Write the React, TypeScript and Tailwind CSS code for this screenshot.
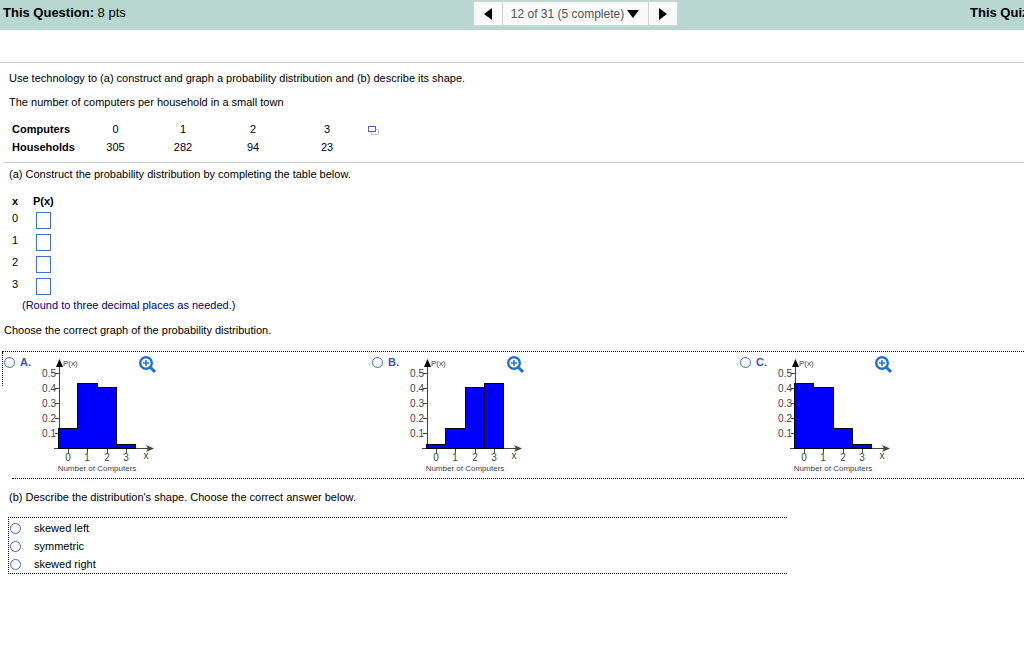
const distribution = [
  { computers: 0, households: 305, width: "w-[67px]" },
  { computers: 1, households: 282, width: "w-[68px]" },
  { computers: 2, households: 94, width: "w-[72px]" },
  { computers: 3, households: 23, width: "w-[76px]" },
];

// y of the top of each bar, left to right
const graphs = [
  { label: "A", tops: [72, 27, 31, 88] },
  { label: "B", tops: [88, 72, 31, 27] },
  { label: "C", tops: [27, 31, 72, 88] },
];

const shapes = ["skewed left", "symmetric", "skewed right"];

const radioClass =
  "appearance-none block shrink-0 w-[11px] h-[11px] rounded-full border border-[#4a63d8] bg-white checked:bg-[#4a63d8]";

function Histogram({ tops }: { tops: number[] }) {
  const edges = [18, 37, 57, 76, 95];

  return (
    <svg width="116" height="120" viewBox="0 0 116 120" className="block" fill="#444">
      <path d="M19.5 6V92.5M14 92.5H108" stroke="#444" fill="none" />
      <path d="M19.5 3L23 11H16Z" fill="#000" />
      <path d="M114 92.5L106 89L108 92.5L106 96Z" />
      {[17, 32, 47, 62, 77].map((y, i) => (
        <g key={y}>
          <path d={`M15 ${y + 0.5}H19`} stroke="#444" />
          <text x="16" y={y + 4} fontSize="10" textAnchor="end">
            {(0.5 - i * 0.1).toFixed(1)}
          </text>
        </g>
      ))}
      {tops.map((top, i) => (
        <g key={i}>
          <rect
            x={edges[i] + 0.5}
            y={top + 0.5}
            width={edges[i + 1] - edges[i]}
            height={92 - top}
            fill="#0000ff"
            stroke="#000"
          />
          <path d={`M${edges[i] + 10.5} 93V97`} stroke="#444" />
          <text x={edges[i] + 10} y="105" fontSize="10" textAnchor="middle">
            {i}
          </text>
        </g>
      ))}
      <text x="23" y="10" fontSize="8">
        P(x)
      </text>
      <text x="106" y="103" fontSize="10" textAnchor="middle">
        x
      </text>
      <text x="57" y="115" fontSize="8" textAnchor="middle">
        Number of Computers
      </text>
    </svg>
  );
}

function ZoomIcon() {
  return (
    <svg width="18" height="18" viewBox="0 0 18 18" fill="none" stroke="#1a73d9">
      <circle cx="7" cy="7" r="5.8" strokeWidth="2.4" />
      <path d="M7 4V10M4 7H10" strokeWidth="1.5" />
      <path d="M11.5 11.5L16 16" strokeWidth="3" />
    </svg>
  );
}

function Header() {
  return (
    <header className="flex h-[30px] min-w-[1150px] items-start bg-[#b9d7d1] px-[3px] text-[13px]">
      <div className="flex-1 leading-[26px]">
        <b>This Question:</b> 8 pts
      </div>
      <nav className="mt-px flex h-[25px] rounded-xs border border-[#d4d4d4] bg-[#f9f9f9]">
        <button aria-label="Previous question" className="flex w-7 items-center justify-center">
          <svg width="8" height="12" viewBox="0 0 8 12">
            <path d="M8 0V12L0 6Z" />
          </svg>
        </button>
        <button className="flex w-[147px] items-center justify-center gap-[3px] border-x border-[#d4d4d4] text-xs text-[#555]">
          12 of 31 (5 complete)
          <svg width="12" height="8" viewBox="0 0 12 8">
            <path d="M0 0H12L6 8Z" />
          </svg>
        </button>
        <button aria-label="Next question" className="flex w-7 items-center justify-center">
          <svg width="8" height="12" viewBox="0 0 8 12">
            <path d="M0 0V12L8 6Z" />
          </svg>
        </button>
      </nav>
      <div className="flex flex-1 justify-end leading-[26px]">
        <b className="w-[177px]">This Quiz:</b>
      </div>
    </header>
  );
}

export default function App() {
  return (
    <div className="min-h-screen overflow-hidden bg-white font-['Liberation_Sans',Arial,sans-serif] text-[11px] leading-4 text-black">
      <Header />
      <div className="h-[33px] border-b border-[#c5cddd]" />

      <main>
        <section className="pt-[7px]">
          <p className="pl-[9px]">
            Use technology to (a) construct and graph a probability distribution and (b) describe its shape.
          </p>
          <p className="mt-2 pl-[9px]">The number of computers per household in a small town</p>

          <div className="mt-[10px] flex items-start gap-[3px] pl-3">
            <table className="table-fixed text-center leading-[18px]">
              <tbody>
                <tr>
                  <th className="w-[70px] text-left">Computers</th>
                  {distribution.map((d) => (
                    <td key={d.computers} className={d.width}>
                      {d.computers}
                    </td>
                  ))}
                </tr>
                <tr>
                  <th className="text-left">Households</th>
                  {distribution.map((d) => (
                    <td key={d.computers}>{d.households}</td>
                  ))}
                </tr>
              </tbody>
            </table>
            <button aria-label="Open data table" className="mt-[6px]">
              <svg width="11" height="9" viewBox="0 0 11 9" className="block">
                <rect x="3.5" y="3.5" width="7" height="5" fill="#fff" stroke="#c3c6e6" />
                <rect x="0.5" y="0.5" width="7" height="5" fill="#fff" stroke="#5560b0" />
              </svg>
            </button>
          </div>
        </section>

        <section className="ml-1 mt-[6px] border-t border-[#c5cddd] pt-[3px]">
          <p className="pl-[5px]">(a) Construct the probability distribution by completing the table below.</p>

          <table className="ml-2 mt-[10px]">
            <thead>
              <tr className="text-left leading-[18px]">
                <th className="w-[21px] p-0">x</th>
                <th className="p-0">P(x)</th>
              </tr>
            </thead>
            <tbody>
              {distribution.map((d) => (
                <tr key={d.computers} className="h-[22px] align-top">
                  <td className="p-0">{d.computers}</td>
                  <td className="pl-[3px] pt-[2px]">
                    <input
                      type="text"
                      aria-label={`P(${d.computers})`}
                      className="block h-[17px] w-[15px] border border-[#3f6fd0] bg-white"
                    />
                  </td>
                </tr>
              ))}
            </tbody>
          </table>
          <p className="-mt-px pl-[18px] text-[#000080]">(Round to three decimal places as needed.)</p>
        </section>

        <section className="pt-[9px]">
          <p className="pl-1">Choose the correct graph of the probability distribution.</p>

          <div className="ml-[2px] mt-[13px] flex min-w-[1150px] border-t border-dotted border-black">
            <span className="-mr-px h-[34px] border-l border-dotted border-black" />
            {graphs.map((graph) => (
              <div key={graph.label} className="flex w-[368px] items-start pl-[2px] pt-1">
                <label className="flex w-9 items-center gap-[5px] text-[11px] font-bold leading-3 text-[#3b50c8]">
                  <input type="radio" name="graph" className={radioClass} />
                  {graph.label}.
                </label>
                <Histogram tops={graph.tops} />
                <button aria-label={`Enlarge graph ${graph.label}`} className="-ml-[17px]">
                  <ZoomIcon />
                </button>
              </div>
            ))}
          </div>
          <div className="ml-3 mt-[2px] border-t border-dotted border-black" />
        </section>

        <section className="pt-[10px]">
          <p className="pl-[9px]">
            (b) Describe the distribution's shape. Choose the correct answer below.
          </p>

          <div className="ml-2 mt-3 max-w-[779px] border-y border-l border-dotted border-black pl-px pt-px">
            {shapes.map((shape) => (
              <label key={shape} className="flex h-[18px] items-center gap-[13px]">
                <input type="radio" name="shape" className={radioClass} />
                {shape}
              </label>
            ))}
          </div>
        </section>
      </main>
    </div>
  );
}
